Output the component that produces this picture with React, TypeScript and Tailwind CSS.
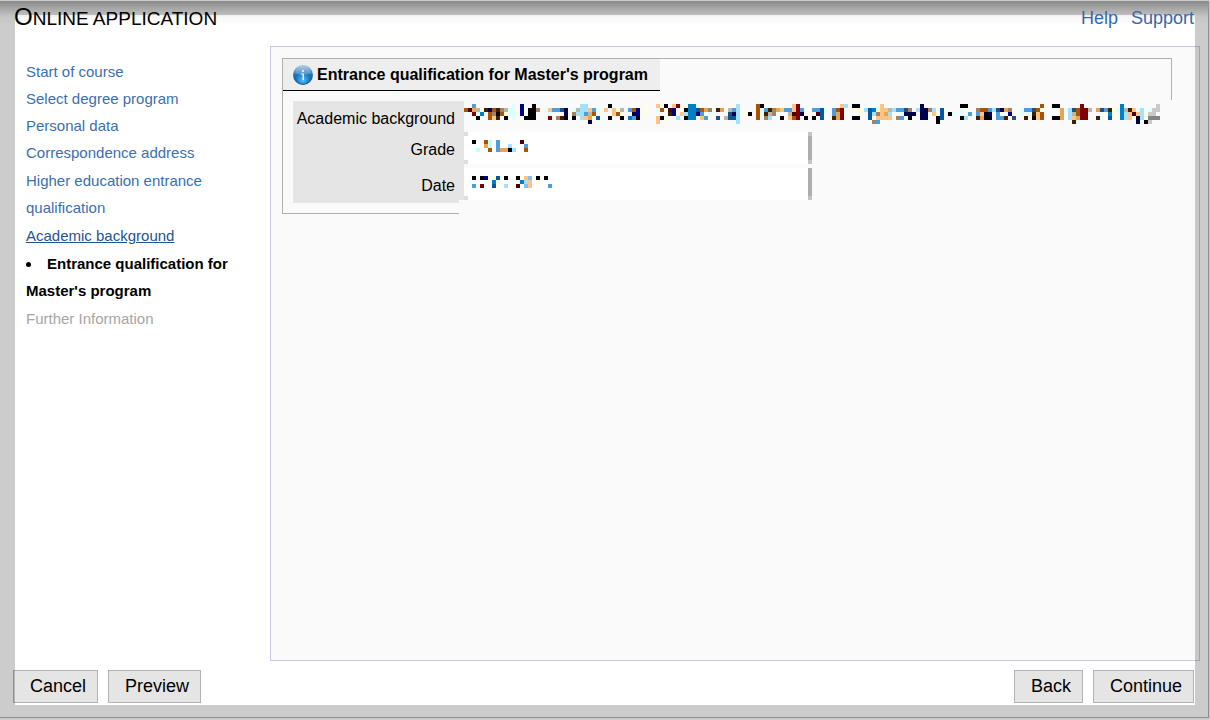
import React from "react";

const PALETTE: Record<string, string> = {
  k: "#000000",
  n: "#000080",
  d: "#000050",
  b: "#0080c8",
  B: "#0058a8",
  z: "#205080",
  m: "#4c9ce0",
  l: "#80c0ff",
  s: "#a4e0ff",
  c: "#e0ffff",
  C: "#c0ffff",
  o: "#a85400",
  t: "#e8a450",
  p: "#ffc484",
  u: "#a88060",
  w: "#402000",
  r: "#800000",
  R: "#500000",
  y: "#ffffe0",
  g: "#b8b8a8",
  G: "#848484",
  h: "#cacaca",
  e: "#dedede",
  E: "#c4c4c4",
};

// Every row is a list of runs: start column followed by one letter per cell
const BACKGROUND_ROWS = [
  "",
  "2m 12c 14n 17k 29ss 36k 45y 48p 50k 52pr 56bb 68s 73ok 82pr 94ps 97kk 104p 114d 124kk 144o 147kk 154r 164b 173h",
  "0oRtg 5wdowug 11cc 14n 16kku 20cpmmzd 27cgsspmc 35p 37pyg 41mon 45y 48co 51Rn 55kbbBotu 62cwt 66gms 73ocmwut 79pmmprm 87mm 89Bc 92mor 97yyysBbyppgsmmzu 113sddu 117s 119B 124cy 128uoomszdtu 139cmmzo 149tcszorrg 158tzmw 162ycbgwpcs 171chh",
  "2rcb 6oukoy 11cc 14n 16kk 21c 25d 27ussmgo 37poy 42dn 45y 51wn 54psbbnm 61c 66zds 70yk 73ocwgu 81gRrd 86y 88R 89B 92mtr 99y 101Bsupts 109cddd 114dd 117py 119B 121kc 124c 126m 128mpkd 133m 136n 139c 141cwpo 149t 151sgorr 160yb 162y 164bspRpsy 171hh",
  "3k 6opw 10k 12c 15kkk 21r 23uwk 27k 29spt 33B 36k 39k 41bmk 48pky 53s 55kbb 59pm 63z 65gzBs 73ocus 79k 81por 85k 87k 89B 92wtr 97kk 101Bypppp 108um 111k 114dd 118kB 124ks 128wtkk 133m 134mw 137z 140wykpo 147kkt 151sptrr 158wc 161By 164bsp 168ks 171GGG",
  "31d 48p 68s 102um 118k 152wc 168d 170kh",
];

const GRADE_ROWS = [
  "0e 86E",
  "",
  "2k 5oC 8m 14R",
  "5tC 8m 11s 15m",
  "3C 6o 8mttks 15o",
  "",
  "",
  "0e 86E",
];

const DATE_ROWS = [
  "",
  "",
  "2k 4kn 7yB 10k 13k 15pl 18k 20k",
  "7by 14bsp 18y",
  "2m 4r 7By 10s 13R 15lp 21m",
  "",
  "",
  "0e 86E",
];

interface MosaicProps {
  rows: string[];
  columns: number;
  className?: string;
}

const Mosaic: React.FC<MosaicProps> = ({ rows, columns, className = "" }) => (
  <svg
    width={columns * 4}
    height={rows.length * 4}
    viewBox={`0 0 ${columns} ${rows.length}`}
    shapeRendering="crispEdges"
    aria-hidden="true"
    className={className}
  >
    {rows.flatMap((row, y) =>
      row
        .split(" ")
        .filter(Boolean)
        .flatMap((run) => {
          const start = parseInt(run, 10);
          const cells = run.replace(/^\d+/, "").split("");
          return cells.map((cell, i) => (
            <rect
              key={`${y}-${start + i}`}
              x={start + i}
              y={y}
              width={1}
              height={1}
              fill={PALETTE[cell]}
            />
          ));
        }),
    )}
  </svg>
);

const InfoIcon: React.FC = () => (
  <svg width="20" height="20" viewBox="0 0 20 20" aria-hidden="true">
    <defs>
      <linearGradient id="info-base" x1="0" y1="0" x2="0" y2="1">
        <stop offset="0" stopColor="#b4c8d8" />
        <stop offset="0.2" stopColor="#6fa6d0" />
        <stop offset="0.5" stopColor="#1b74bb" />
        <stop offset="0.8" stopColor="#0d62ab" />
        <stop offset="1" stopColor="#0f4a86" />
      </linearGradient>
      <radialGradient id="info-glow" cx="0.5" cy="0.8" r="0.45">
        <stop offset="0" stopColor="#4fc3f7" />
        <stop offset="1" stopColor="#4fc3f7" stopOpacity="0" />
      </radialGradient>
    </defs>
    <circle cx="10" cy="10" r="10" fill="url(#info-base)" />
    <circle cx="10" cy="10" r="9" fill="url(#info-glow)" />
    <path d="M2 8a8 7 0 0116 0q-8 3-16 0z" fill="#fff" fillOpacity="0.18" />
    <circle cx="10" cy="6" r="1.2" fill="#d8e8f4" />
    <path d="M8 8.500h3V15H9.500V9.500H8z" fill="#e4f0f8" />
  </svg>
);

const steps = [
  { label: "Start of course" },
  { label: "Select degree program" },
  { label: "Personal data" },
  { label: "Correspondence address" },
  { label: "Higher education entrance qualification", wraps: true },
  { label: "Academic background", underlined: true },
];

const fields = [
  { id: "grade", label: "Grade", rows: GRADE_ROWS, rowClass: "h-9" },
  { id: "date", label: "Date", rows: DATE_ROWS, rowClass: "h-8" },
];

const labelClass =
  "w-[171px] shrink-0 bg-[#e5e5e5] pr-[9px] text-right leading-9";

const buttonClass =
  "h-[33px] border border-black/22 bg-black/10 pr-[11px] pb-[2px] pl-4 text-lg leading-none text-black";

const App: React.FC = () => {
  return (
    <div
      className="flex min-h-screen flex-col bg-[#ccc] pt-px pr-px pb-[2px] text-black"
      style={{ fontFamily: '"Liberation Sans", Arial, sans-serif' }}
    >
      <div className="flex flex-1 flex-col border-r border-b border-[#8f8f8f] bg-white shadow-[inset_15px_0_#ccc,inset_-13px_0_#ccc,inset_0_14px_#ccc,inset_0_-12px_#ccc]">
        <div className="flex flex-1 flex-col bg-[linear-gradient(to_bottom,rgba(0,0,0,0.32),rgba(0,0,0,0.1)_12px,rgba(0,0,0,0.03)_16px,transparent_24px)] pb-[14px]">
          {/* Header */}
          <header className="flex h-[45px] items-start justify-between pr-[14px] pl-[14px]">
            <h1 className="text-[19px] leading-6 uppercase first-letter:text-2xl">
              Online application
            </h1>
            <div className="flex gap-[13px] pt-[5px] text-lg leading-6 text-[#3568ac]">
              <a href="#help">Help</a>
              <a href="#support">Support</a>
            </div>
          </header>

          <div className="flex flex-1 pr-2">
            {/* Step navigation */}
            <nav className="w-[270px] shrink-0 pt-3 pr-10 pl-[26px] text-[15px] leading-[27px]">
              <ul>
                {steps.map((step) => (
                  <li key={step.label} className={step.wraps ? "py-px" : ""}>
                    <a
                      href="#step"
                      className={
                        step.underlined
                          ? "text-[#24558f] underline"
                          : "text-[#3a6fb0]"
                      }
                    >
                      {step.label}
                    </a>
                  </li>
                ))}
                <li className="list-inside list-disc py-px font-bold">
                  Entrance qualification for Master's program
                </li>
                <li className="text-[#a6a6a6]">Further Information</li>
              </ul>
            </nav>

            {/* Form panel */}
            <main className="min-w-0 flex-1 border border-[#000080]/20 bg-black/2 py-[11px] pr-[27px] pl-[11px]">
              <section className="border-l border-[#b0b0b0]">
                <div className="h-[42px] border-t border-r border-[#b0b0b0]">
                  <h2 className="flex h-8 w-fit items-center gap-1 border-b border-black bg-[#eee] pr-3 pl-[10px] text-base font-bold">
                    <InfoIcon />
                    Entrance qualification for Master's program
                  </h2>
                </div>

                <form className="pt-px pl-[10px] text-base">
                  <div className="flex h-[31px]">
                    <label htmlFor="background" className={labelClass}>
                      Academic background
                    </label>
                    <output id="background" className="-mt-px min-w-0 flex-1">
                      <Mosaic rows={BACKGROUND_ROWS} columns={174} />
                    </output>
                  </div>
                  {fields.map((field) => (
                    <div key={field.id} className={`flex ${field.rowClass}`}>
                      <label htmlFor={field.id} className={labelClass}>
                        {field.label}
                      </label>
                      <div className="relative h-8 w-[348px]">
                        <input
                          id={field.id}
                          type="text"
                          readOnly
                          className="block h-8 w-full border-r-4 border-[#adadad] bg-white outline-none"
                        />
                        <Mosaic
                          rows={field.rows}
                          columns={87}
                          className="pointer-events-none absolute top-0 left-0"
                        />
                      </div>
                    </div>
                  ))}
                  <div className="h-[3px] w-[166px] bg-[#e5e5e5]" />
                </form>
                <div className="h-[11px] w-[176px] border-b border-[#b0b0b0]" />
              </section>
            </main>
          </div>

          {/* Footer buttons */}
          <footer className="flex justify-between pt-[9px] pr-[14px] pl-[13px]">
            <div className="flex gap-[10px]">
              <button type="button" className={buttonClass}>
                Cancel
              </button>
              <button type="button" className={buttonClass}>
                Preview
              </button>
            </div>
            <div className="flex gap-[10px]">
              <button type="button" className={buttonClass}>
                Back
              </button>
              <button type="button" className={buttonClass}>
                Continue
              </button>
            </div>
          </footer>
        </div>
      </div>
    </div>
  );
};

export default App;
